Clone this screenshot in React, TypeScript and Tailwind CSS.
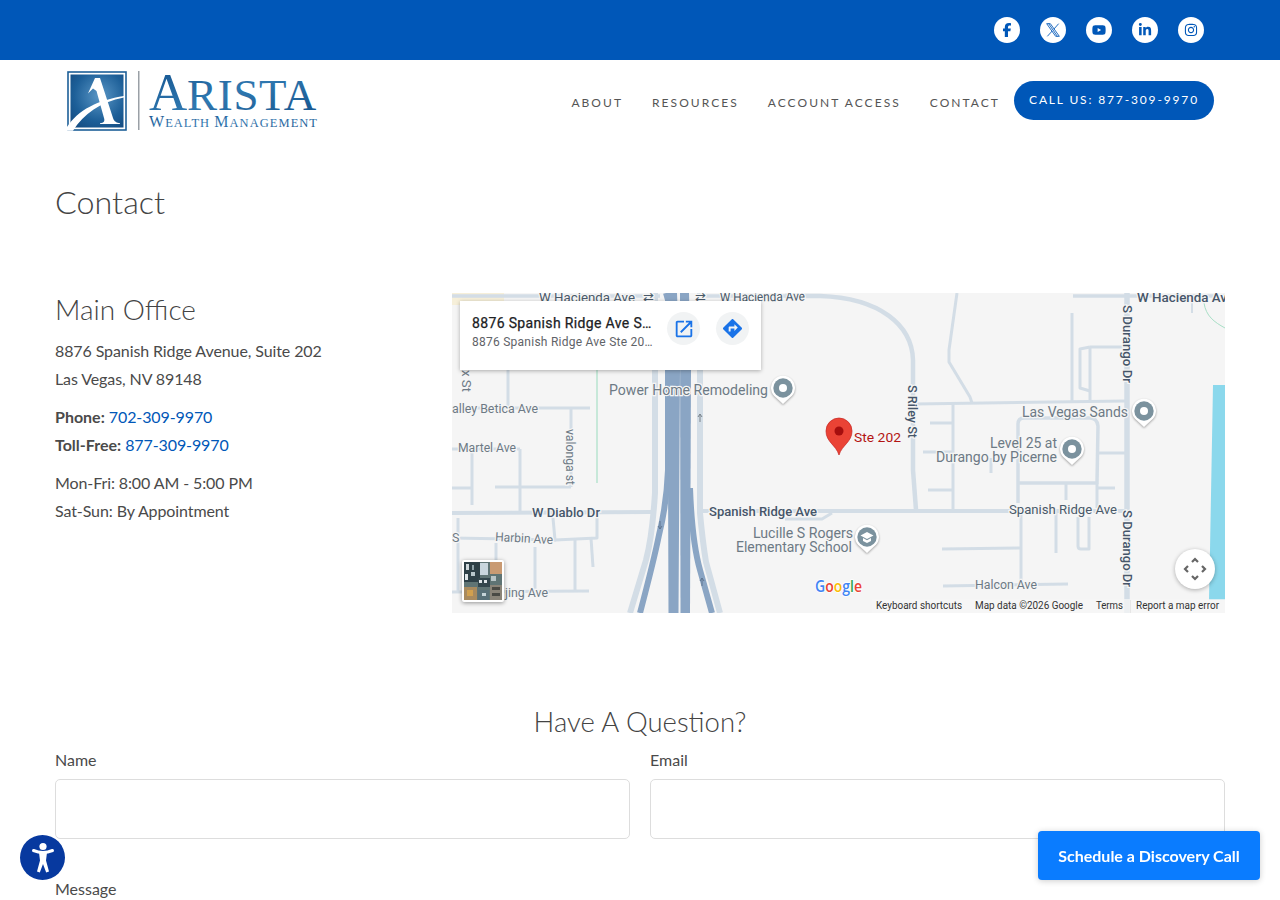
import React from "react";
import { FaFacebookF, FaYoutube, FaLinkedinIn, FaInstagram } from "react-icons/fa6";

const XIcon = () => (
  <svg width="16" height="16" viewBox="0 0 24 24" fill="none" stroke="currentColor" strokeWidth="1.3">
    <path d="M2.5 2.5 H8 L21.5 21.5 H16 Z M5.5 2.5 L18.5 21.5 M20.5 2.5 L13.2 10.8 M10.8 13.5 L3.5 21.5" />
  </svg>
);

const socials = [FaFacebookF, XIcon, FaYoutube, FaLinkedinIn, FaInstagram];
const nav = ["About", "Resources", "Account Access", "Contact"];

function Logo() {
  return (
    <svg width="270" height="80" viewBox="55 60 270 80" aria-label="Arista Wealth Management">
      <defs>
        <radialGradient id="sq" cx="0.55" cy="0.4" r="0.8">
          <stop offset="0" stopColor="#5b97c6" />
          <stop offset="0.6" stopColor="#1d5f98" />
          <stop offset="1" stopColor="#12477c" />
        </radialGradient>
        <linearGradient id="tx" x1="0" y1="0" x2="1" y2="1">
          <stop offset="0" stopColor="#12508c" />
          <stop offset="0.5" stopColor="#2f78b0" />
          <stop offset="1" stopColor="#135089" />
        </linearGradient>
      </defs>
      <rect x="68" y="72" width="58" height="58" fill="none" stroke="#1d5f98" strokeWidth="1.6" />
      <rect x="70.5" y="74.5" width="53" height="53" fill="url(#sq)" />
      <path d="M95 78 L100 78 L113 118 C114 121.5 117 123 120 123.2 L120 124 L100 124 L100 123.2 C104 123 105 121 104 118 L96.5 91 L93 88.5 L88 93.5 Z" fill="#fff" />
      <path d="M67 127 C78 110 98 100 124 96 L124 97.6 C100 102 84 114 73 130.7 L67 130.7Z" fill="#fff" />
      <rect x="138" y="71" width="1.5" height="59" fill="#9aa0a6" />
      <text x="149" y="110" fill="url(#tx)" fontFamily="'Liberation Serif', serif" letterSpacing="0.7">
        <tspan fontSize="53">A</tspan>
        <tspan fontSize="45" dx="-1">RISTA</tspan>
      </text>
      <text x="149" y="127" fill="url(#tx)" fontFamily="'Liberation Serif', serif" textLength="168" lengthAdjust="spacing">
        <tspan fontSize="16">W</tspan>
        <tspan fontSize="12.5">EALTH </tspan>
        <tspan fontSize="16">M</tspan>
        <tspan fontSize="12.5">ANAGEMENT</tspan>
      </text>
    </svg>
  );
}

const L = ({ d, w = 3, c = "#d3dde6" }: { d: string; w?: number; c?: string }) => (
  <path d={d} fill="none" stroke={c} strokeWidth={w} strokeLinejoin="round" />
);

const T = ({
  x, y, len, size = 12.5, c = "#6d7a85", w = 400, rot, children,
}: {
  x: number; y: number; len?: number; size?: number; c?: string; w?: number; rot?: number; children: React.ReactNode;
}) => (
  <text
    x={x}
    y={y}
    fontSize={size}
    fontWeight={w}
    fill={c}
    fontFamily="Roboto, sans-serif"
    stroke="#f5f5f5"
    strokeWidth="2.5"
    paintOrder="stroke"
    textLength={len}
    lengthAdjust="spacingAndGlyphs"
    transform={rot ? `rotate(${rot} ${x} ${y})` : undefined}
  >
    {children}
  </text>
);

const Poi = ({ x, y, school }: { x: number; y: number; school?: boolean }) => (
  <g className="drop-shadow-[0_1px_1px_rgba(0,0,0,0.35)]">
    <path d={`M${x} ${y + 16} L${x - 7} ${y + 9.5} A12 12 0 1 1 ${x + 7} ${y + 9.5} Z`} fill="#fff" />
    <circle cx={x} cy={y} r="9.7" fill="#7b929e" />
    {school ? (
      <path d={`M${x} ${y - 5} L${x + 6.5} ${y - 1.5} L${x} ${y + 2} L${x - 6.5} ${y - 1.5}Z M${x - 4} ${y + 1} L${x} ${y + 3.2} L${x + 4} ${y + 1} V${y + 4} L${x} ${y + 6} L${x - 4} ${y + 4}Z`} fill="#fff" />
    ) : (
      <circle cx={x} cy={y} r="4" fill="#fff" />
    )}
  </g>
);

function MapDrawing() {
  return (
    <svg className="block" width="773" height="320" viewBox="452 293 773 320">
      <rect x="452" y="293" width="773" height="320" fill="#f5f5f5" />
      <rect x="452" y="293" width="52" height="12" fill="#f6efd9" />
      <path d="M1213 385 H1225 V600 H1209 L1210 550Z" fill="#8bd8ec" />
      <path d="M1204 303 C1206 316 1214 322 1225 328" fill="none" stroke="#a8dfc6" strokeWidth="1" />
      <path d="M597 370 V483" fill="none" stroke="#a8dfc6" strokeWidth="1.2" />

      {/* top road */}
      <L d="M452 296 H660" w={3.5} />
      <L d="M700 296 H800" w={3.5} />
      <L d="M1073 296 H1225" w={3.5} />
      {/* left grid */}
      <L d="M452 408 H590" />
      <L d="M571 408 V487" />
      <L d="M508 370 V407" />
      <L d="M452 449 H520" />
      <L d="M520 449 V512" />
      <L d="M472 453 V505" />
      <L d="M452 488 H472" />
      <L d="M495 487 H571" />
      <L d="M452 513 L652 512" w={4} />
      <L d="M458 518 V592" />
      <L d="M452 538 L556 540" />
      <L d="M553 518 L555 540 L597 538 V513" />
      <L d="M575 540 V592" />
      <L d="M591 538 L593 567" />
      <L d="M535 547 V590" />
      <L d="M496 543 V590" />
      <L d="M452 592 L589 591" />
      {/* spanish ridge and right grid */}
      <L d="M700 511 H1127" w={4} />
      <L d="M785 519 H822 L832 513" />
      <L d="M785 296 H820 C880 298 912 325 913 360 L913 470 L916 510" w={4.5} />
      <L d="M957 293 L949 350 V362 L970 397 L972 403" />
      <L d="M915 404 L1125 401" />
      <L d="M1072 313 V402" />
      <L d="M1090 347 H1125" />
      <L d="M1090 347 L1080 349 V388 L1090 391" />
      <L d="M1090 347 V402" />
      <L d="M1018 503 V424 Q1018 418 1024 418 H1090 Q1097 418 1098 426 L1097 483 H1018" w={3.5} />
      <L d="M1098 453 H1125" />
      <L d="M1066 483 V500" />
      <L d="M1097 483 V508" />
      <L d="M1097 488 H1115" />
      <L d="M953 404 V510" />
      <L d="M930 423 H953" />
      <L d="M923 452 H953" />
      <L d="M928 490 H953" />
      <L d="M991 458 V473" />
      <L d="M1021 513 V584" />
      <L d="M942 549 L1021 548" />
      <L d="M1056 513 V553" />
      <L d="M1078 517 V546 Q1078 549 1081 549 H1089 V517" />
      <L d="M943 586 L1068 584" />
      <L d="M1127 293 V613" w={5.5} />
      <L d="M1192 296 V313" w={2} />

      {/* highway */}
      <L d="M655 293 V450 L655 493 C653 525 650 545 646 560 L630 613" w={6} />
      <L d="M700 293 V450 L700 513 C702 535 704 550 706 562 L720 613" w={6} />
      <L d="M666 293 L668 300 V470 C667 495 664 515 659 535 C656 550 650 575 640 613" w={6} c="#8aa5c4" />
      <L d="M690 488 C691 515 693 545 700 570 L712 613" w={6} c="#8aa5c4" />
      <path d="M666 293 H677 L680 370 L678.5 613 H668.5 L668 470 L670 370Z" fill="#8aa5c4" />
      <path d="M680 293 H689 L691 370 L690 613 H680.5Z" fill="#8aa5c4" />
      <path d="M700 422 V414 M698 417 L700 414 L702 417" stroke="#7a848c" strokeWidth="1" fill="none" />
      <path d="M660 521 V529 M658 526 L660 529 L662 526" stroke="#5f7590" strokeWidth="1" fill="none" />
      <path d="M702 578 V586 M700 581 L702 578 L704 581" stroke="#5f7590" strokeWidth="1" fill="none" />

      {/* labels */}
      <T x={539} y={302} len={96} size={13} c="#4a5a6a">W Hacienda Ave</T>
      <T x={643} y={302} c="#4a5a6a">⇄</T>
      <T x={695} y={302} c="#4a5a6a">⇄</T>
      <T x={720} y={302} len={85} size={13} c="#4a5a6a" rot={-1}>W Hacienda Ave</T>
      <T x={1137} y={302} len={90} size={13} c="#46566a" w={500}>W Hacienda Av</T>
      <T x={609} y={395} len={159} size={14}>Power Home Remodeling</T>
      <T x={462} y={370} len={22} rot={90}>x St</T>
      <T x={452} y={413} len={86}>alley Betica Ave</T>
      <T x={458} y={452} len={58}>Martel Ave</T>
      <T x={566} y={429} len={56} rot={90}>valonga st</T>
      <T x={532} y={517} len={68} size={13} c="#46566a" w={500}>W Diablo Dr</T>
      <T x={709} y={516} len={108} size={13} c="#46566a" w={500}>Spanish Ridge Ave</T>
      <T x={1009} y={514} len={108} size={13} c="#4a5a6a">Spanish Ridge Ave</T>
      <T x={753} y={538} len={100} size={14}>Lucille S Rogers</T>
      <T x={736} y={552} len={116} size={14}>Elementary School</T>
      <T x={452} y={542}>S</T>
      <T x={495} y={541} len={58} rot={3}>Harbin Ave</T>
      <T x={505} y={597} len={43}>jing Ave</T>
      <T x={975} y={589} len={62}>Halcon Ave</T>
      <T x={1022} y={417} len={106} size={14}>Las Vegas Sands</T>
      <T x={990} y={448} len={67} size={14}>Level 25 at</T>
      <T x={936} y={462} len={121} size={14}>Durango by Picerne</T>
      <T x={908} y={385} len={53} size={13} c="#46566a" w={500} rot={90}>S Riley St</T>
      <T x={1123} y={305} len={78} size={13} c="#46566a" w={500} rot={90}>S Durango Dr</T>
      <T x={1123} y={510} len={77} size={13} c="#46566a" w={500} rot={90}>S Durango Dr</T>
      <T x={854} y={442} len={47} size={13.5} c="#b31412">Ste 202</T>

      <Poi x={783} y={388} />
      <Poi x={1144} y={411} />
      <Poi x={1072} y={449} />
      <Poi x={867} y={537} school />

      {/* red pin */}
      <path d="M839 455 C836 445 826 442 826 431 A13 13 0 0 1 852 431 C852 442 842 445 839 455Z" fill="#ea4335" stroke="#c5221f" strokeWidth="0.7" />
      <circle cx="839" cy="431" r="4.5" fill="#a50e0e" />

      {/* google */}
      <text x="815" y="592" fontSize="15.5" fontWeight="600" fontFamily="'Open Sans', sans-serif" textLength="47" lengthAdjust="spacingAndGlyphs" stroke="#fff" strokeWidth="1.5" paintOrder="stroke">
        <tspan fill="#4285f4">G</tspan>
        <tspan fill="#ea4335">o</tspan>
        <tspan fill="#fbbc05">o</tspan>
        <tspan fill="#4285f4">g</tspan>
        <tspan fill="#34a853">l</tspan>
        <tspan fill="#ea4335">e</tspan>
      </text>

      {/* attribution */}
      <rect x="872" y="599" width="353" height="14" fill="#f5f5f5" fillOpacity="0.75" />
      <g fontSize="10" fontFamily="Roboto, sans-serif" fill="#333">
        <text x="876" y="609" textLength="86" lengthAdjust="spacingAndGlyphs">Keyboard shortcuts</text>
        <text x="975" y="609" textLength="108" lengthAdjust="spacingAndGlyphs">Map data ©2026 Google</text>
        <text x="1096" y="609" textLength="27" lengthAdjust="spacingAndGlyphs">Terms</text>
        <text x="1136" y="609" textLength="83" lengthAdjust="spacingAndGlyphs">Report a map error</text>
      </g>
      <path d="M1130.5 600 V613" stroke="#e6e6e6" strokeWidth="1" />
    </svg>
  );
}

function Thumb() {
  return (
    <svg width="38" height="38" viewBox="0 0 38 38" className="block blur-[0.5px]">
      <rect width="38" height="38" fill="#5f7474" />
      <rect x="26" y="0" width="12" height="12" fill="#c99a72" />
      <rect x="0" y="0" width="16" height="20" fill="#2e4047" />
      <rect x="2" y="2" width="3" height="6" fill="#cfd8dc" />
      <rect x="8" y="3" width="2" height="5" fill="#8fa2a8" />
      <rect x="7" y="10" width="4" height="4" fill="#b8c6cb" />
      <rect x="1" y="12" width="3" height="6" fill="#dfe5e8" />
      <rect x="16" y="1" width="8" height="12" fill="#c9d6dd" />
      <rect x="14" y="16" width="12" height="9" fill="#33464c" />
      <rect x="15" y="18" width="3" height="3" fill="#dfe5e8" />
      <rect x="20" y="18" width="3" height="3" fill="#dfe5e8" />
      <rect x="27" y="14" width="5" height="5" fill="#b9c4c6" />
      <rect x="0" y="25" width="13" height="13" fill="#a88a5e" />
      <rect x="3" y="28" width="6" height="6" fill="#d1a04e" />
      <rect x="14" y="28" width="11" height="10" fill="#587078" />
      <rect x="18" y="31" width="4" height="3" fill="#c5d3d8" />
      <rect x="26" y="23" width="12" height="15" fill="#8a8478" />
      <rect x="28" y="25" width="8" height="3" fill="#4a4a44" />
      <rect x="28" y="31" width="8" height="3" fill="#4a4a44" />
    </svg>
  );
}

function Field({ label }: { label: string }) {
  return (
    <label className="block">
      <span className="block leading-7 mb-[5px]">{label}</span>
      <input className="block w-full h-[60px] border border-[#dddddd] rounded-[5px] bg-white" />
    </label>
  );
}

export default function App() {
  return (
    <div className="relative h-[900px] overflow-hidden bg-white text-base text-[#4a4a4a] font-['Lato',sans-serif]">
      <div className="h-[60px] bg-[#0057b8] flex items-center justify-end gap-5 pr-[76px]">
        {socials.map((Icon, i) => (
          <a key={i} className="w-[26px] h-[26px] rounded-full bg-white flex items-center justify-center text-[#0057b8] text-[14px]">
            <Icon />
          </a>
        ))}
      </div>

      <header className="h-20 flex items-center pl-[55px] pr-[66px]">
        <Logo />
        <nav className="ml-auto flex items-center">
          {nav.map((n) => (
            <a key={n} className="mt-[6px] ml-[29px] first:ml-0 text-[12px] uppercase tracking-[2.05px] text-[#555555]">
              {n}
            </a>
          ))}
          <a className="ml-[14px] h-[39px] w-[200px] rounded-[20px] bg-[#0057b8] text-white text-[12px] tracking-[1.85px] uppercase flex items-center justify-center">
            Call Us: 877-309-9970
          </a>
        </nav>
      </header>

      <main className="px-[55px]">
        <h1 className="mt-[39px] text-[32.3px] leading-[46px] font-light text-[#444444]">Contact</h1>

        <section className="mt-[68px] flex justify-between">
          <div className="tracking-[-0.1px]">
            <h2 className="text-[28px] leading-[32px] tracking-normal font-light mb-[12px] text-[#444444]">Main Office</h2>
            <p className="leading-7 mb-[10px]">
              8876 Spanish Ridge Avenue, Suite 202
              <br />
              Las Vegas, NV 89148
            </p>
            <p className="leading-7 mb-[10px]">
              <strong className="font-bold tracking-normal">Phone:</strong> <a className="text-[#0057b8]">702-309-9970</a>
              <br />
              <strong className="font-bold tracking-normal">Toll-Free:</strong> <a className="text-[#0057b8]">877-309-9970</a>
            </p>
            <p className="leading-7">
              Mon-Fri: 8:00 AM - 5:00 PM
              <br />
              Sat-Sun: By Appointment
            </p>
          </div>

          <div className="relative w-[773px] h-[320px] overflow-hidden font-['Roboto',sans-serif]">
            <MapDrawing />
            <div className="absolute left-2 top-2 w-[301px] h-[69px] bg-white shadow-[0_1px_4px_rgba(0,0,0,0.3)] flex pl-3 pr-3">
              <div className="w-[183px] mr-[2px] pt-[12px]">
                <div className="w-[180px] text-[14px] leading-[20px] font-normal tracking-[0.35px] text-[#202124] truncate [-webkit-text-stroke:0.25px_#202124]">8876 Spanish Ridge Ave Ste 202</div>
                <div className="text-[12px] leading-[18px] tracking-[0.25px] text-[#5f6368] truncate">8876 Spanish Ridge Ave Ste 202, Las Vegas</div>
              </div>
              <div className="ml-[10px] mt-[11px] w-[33px] h-[33px] rounded-full bg-[#f1f3f4] flex items-center justify-center">
                <svg width="22" height="22" viewBox="0 0 24 24" fill="#1a73e8">
                  <path d="M19 19H5V5h7V3H5c-1.11 0-2 .9-2 2v14c0 1.1.89 2 2 2h14c1.1 0 2-.9 2-2v-7h-2v7zM14 3v2h3.59l-9.83 9.83 1.41 1.41L19 6.41V10h2V3h-7z" />
                </svg>
              </div>
              <div className="ml-4 mt-[11px] w-[33px] h-[33px] rounded-full bg-[#f1f3f4] flex items-center justify-center">
                <svg width="23" height="23" viewBox="0 0 24 24" fill="#1a73e8">
                  <path d="M21.71 11.29l-9-9c-.39-.39-1.02-.39-1.41 0l-9 9c-.39.39-.39 1.02 0 1.41l9 9c.39.39 1.02.39 1.41 0l9-9c.39-.38.39-1.01 0-1.41zM14 14.5V12h-4v3H8v-4c0-.55.45-1 1-1h5V7.5l3.5 3.5-3.5 3.5z" />
                </svg>
              </div>
            </div>
            <div className="absolute left-[10px] top-[267px] w-[42px] h-[42px] bg-white rounded-[2px] p-[2px] shadow-[0_1px_4px_rgba(0,0,0,0.4)] overflow-hidden">
              <Thumb />
            </div>
            <div className="absolute left-[723px] top-[256px] w-10 h-10 rounded-full bg-white shadow-[0_1px_4px_rgba(0,0,0,0.3)] flex items-center justify-center">
              <svg width="24" height="24" viewBox="0 0 24 24" fill="none" stroke="#666666" strokeWidth="2.2">
                <path d="M9 5 L12 2 L15 5 M9 19 L12 22 L15 19 M5 9 L2 12 L5 15 M19 9 L22 12 L19 15" />
              </svg>
            </div>
          </div>
        </section>

        <h2 className="mt-[91px] text-center text-[27.5px] leading-[36px] font-light text-[#444444]">Have A Question?</h2>
        <div className="mt-[6px] grid grid-cols-2 gap-5">
          <Field label="Name" />
          <Field label="Email" />
        </div>
        <label className="block mt-9 leading-7">
          Message
          <textarea className="block w-full h-[150px] mt-[5px] border border-[#dddddd] rounded-[5px]" />
        </label>
      </main>

      <button className="fixed left-5 top-[835px] w-[45px] h-[45px] rounded-full bg-[#07399f] flex items-center justify-center">
        <svg width="30" height="34" viewBox="0 0 30 34" fill="none">
          <circle cx="15" cy="5.5" r="3.6" fill="#fff" />
          <path d="M5.5 9.5 Q15 13.5 24.5 9.5" stroke="#fff" strokeWidth="3" strokeLinecap="round" />
          <path d="M11 11.5 L19 11.5 L18 19.5 L21 30.5 L18.2 31.5 L15 23 L11.8 31.5 L9 30.5 L12 19.5Z" fill="#fff" />
        </svg>
      </button>

      <button className="fixed left-[1038px] top-[831px] w-[222px] h-[49px] rounded-[4px] bg-[#0a7cff] text-white font-bold text-[16px] shadow-[0_1px_6px_rgba(0,0,0,0.2)]">
        Schedule a Discovery Call
      </button>
    </div>
  );
}
